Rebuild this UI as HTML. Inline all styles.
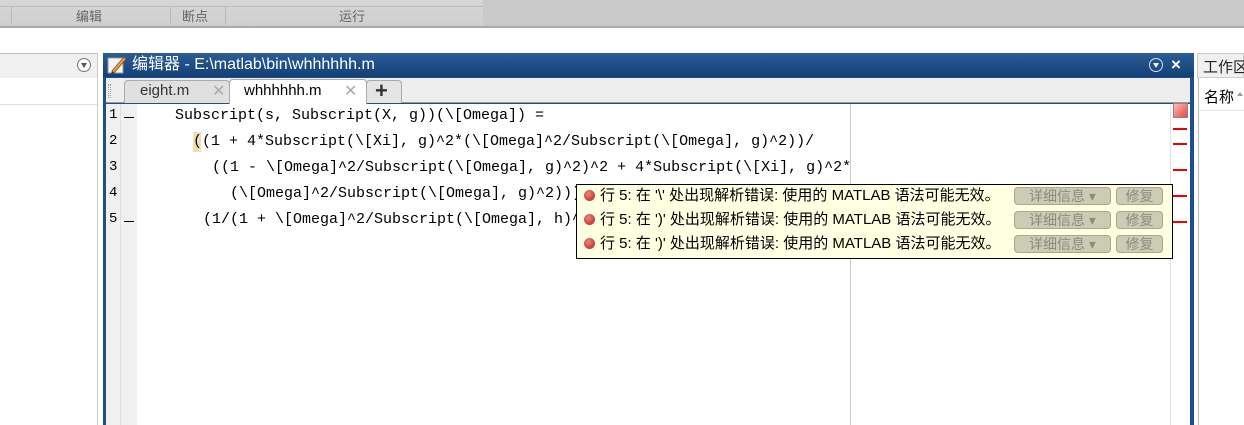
<!DOCTYPE html>
<html><head><meta charset="utf-8"><style>
*{margin:0;padding:0;box-sizing:border-box}
body{width:1244px;height:425px;overflow:hidden;background:#fff;position:relative;font-family:"Liberation Sans","Noto Sans CJK SC",sans-serif}
.a{position:absolute;white-space:nowrap}
.code{position:absolute;font-family:"Liberation Mono","Noto Sans CJK SC",monospace;font-size:15px;white-space:pre;color:#000;height:26px;line-height:26px}
.ln{position:absolute;left:109px;font-family:"Liberation Mono",monospace;font-size:14px;color:#000}
.dash{position:absolute;left:124px;width:10px;height:1px;background:#000}
.msg{position:absolute;left:584px;font-size:15px;color:#000;height:20px;line-height:20px;white-space:pre}
.ic{display:inline-block;width:11px;height:11px;border-radius:50%;background:radial-gradient(circle at 40% 35%,#f08080,#b02020);vertical-align:-1px;margin-right:5px;position:relative}
.btn{position:absolute;height:18px;border:1px solid #a8a890;border-radius:4px;background:#ccccb4;color:#8c8c7c;font-size:14px;line-height:16px;text-align:center;white-space:nowrap}
.mk{position:absolute;left:1173px;width:14px;height:2px;background:#e00}
</style></head><body>
<div class="a" style="left:0;top:0;width:1244px;height:26px;background:#c9c9c9"></div>
<div class="a" style="left:0;top:0;width:483px;height:26px;background:linear-gradient(#d6d6d6,#cfcfcf)"></div>
<div class="a" style="left:0;top:6px;width:483px;height:1px;background:#bdbdbd"></div>
<div class="a" style="left:11px;top:7px;width:1px;height:18px;background:#b8b8b8"></div>
<div class="a" style="left:170px;top:7px;width:1px;height:18px;background:#b8b8b8"></div>
<div class="a" style="left:225px;top:7px;width:1px;height:18px;background:#b8b8b8"></div>
<div class="a" style="left:76px;top:6px;font-size:13px;color:#666">编辑</div>
<div class="a" style="left:182px;top:6px;font-size:13px;color:#666">断点</div>
<div class="a" style="left:339px;top:6px;font-size:13px;color:#666">运行</div>
<div class="a" style="left:0;top:26px;width:1244px;height:2px;background:#aaa"></div>
<div class="a" style="left:0;top:53px;width:97px;height:25px;background:#f0f0f0;border-top:1px solid #bbb"></div>
<div class="a" style="left:77px;top:58px;width:14px;height:14px;border:1px solid #777;border-radius:50%;background:#fafafa"></div>
<div class="a" style="left:81px;top:63px;width:0;height:0;border-left:3px solid transparent;border-right:3px solid transparent;border-top:5px solid #555"></div>
<div class="a" style="left:0;top:104px;width:97px;height:1px;background:#ddd"></div>
<div class="a" style="left:97px;top:53px;width:1px;height:372px;background:#ccc"></div>
<div class="a" style="left:103px;top:53px;width:1091px;height:372px;background:#1f4f8a"></div>
<div class="a" style="left:103px;top:53px;width:1091px;height:24px;background:linear-gradient(#2c5d97,#143f75)"></div>
<svg class="a" style="left:107px;top:55px" width="20" height="20" viewBox="0 0 20 20"><rect x="1" y="3" width="15" height="15" fill="#f4f4f4" stroke="#999"/><path d="M5 16 L17 2 L19 4 L7 18 Z" fill="#e8a040" stroke="#8a5010" stroke-width="0.8"/><path d="M5 16 L4 19 L7 18Z" fill="#333"/></svg>
<div class="a" style="left:132px;top:55px;font-size:16px;line-height:20px;color:#fff">编辑器 - E:\matlab\bin\whhhhhh.m</div>
<div class="a" style="left:1149px;top:58px;width:14px;height:14px;border:1.5px solid #dde;border-radius:50%"></div>
<div class="a" style="left:1153px;top:63px;width:0;height:0;border-left:3px solid transparent;border-right:3px solid transparent;border-top:5px solid #eef"></div>
<div class="a" style="left:1171px;top:55px;font-size:17px;color:#fff;font-weight:bold">×</div>
<div class="a" style="left:106px;top:78px;width:1084px;height:25px;background:#eeeeee;border-bottom:1px solid #999"></div>
<div class="a" style="left:108px;top:84px;width:3px;height:14px;border-left:1px dotted #999;border-right:1px dotted #999"></div>
<div class="a" style="left:124px;top:80px;width:106px;height:23px;background:#e0e0e0;border:1px solid #aaa;border-bottom:none;border-radius:4px 4px 0 0"></div>
<div class="a" style="left:140px;top:82px;font-size:15px;color:#333">eight.m</div>
<div class="a" style="left:212px;top:81px;font-size:16px;color:#aaa">✕</div>
<div class="a" style="left:229px;top:79px;width:138px;height:25px;background:#fff;border:1px solid #aaa;border-bottom:none;border-radius:4px 4px 0 0"></div>
<div class="a" style="left:244px;top:82px;font-size:15px;color:#000">whhhhhh.m</div>
<div class="a" style="left:344px;top:81px;font-size:16px;color:#aaa">✕</div>
<div class="a" style="left:366px;top:80px;width:36px;height:23px;background:#e4e4e4;border:1px solid #aaa;border-bottom:none;border-radius:4px 4px 0 0"></div>
<div class="a" style="left:375px;top:78px;font-size:22px;color:#333;font-weight:bold">+</div>
<div class="a" style="left:106px;top:104px;width:1084px;height:321px;background:#fff"></div>
<div class="a" style="left:106px;top:104px;width:31px;height:321px;background:#f0f0f0"></div>
<div class="a" style="left:120px;top:104px;width:1px;height:321px;background:#e0e0e0"></div>
<div class="a" style="left:850px;top:104px;width:1px;height:321px;background:#ccc"></div>
<div class="a" style="left:1170px;top:104px;width:1px;height:321px;background:#e4e4e4"></div>
<div class="a" style="left:1173px;top:103px;width:15px;height:15px;border:1px solid #888;background:linear-gradient(135deg,#fbb,#e44)"></div>
<div class="mk" style="top:128px"></div><div class="mk" style="top:143px"></div><div class="mk" style="top:169px"></div><div class="mk" style="top:195px"></div><div class="mk" style="top:221px"></div>
<div class="ln" style="top:107px">1</div><div class="dash" style="top:117px"></div>
<div class="ln" style="top:133px">2</div>
<div class="ln" style="top:159px">3</div>
<div class="ln" style="top:185px">4</div>
<div class="ln" style="top:211px">5</div><div class="dash" style="top:221px"></div>
<div class="a" style="left:193px;top:132px;width:8px;height:20px;background:#f0e0b0"></div>
<div class="code" style="left:175px;top:103px">Subscript(s, Subscript(X, g))(\[Omega]) =</div>
<div class="code" style="left:193px;top:129px">((1 + 4*Subscript(\[Xi], g)^2*(\[Omega]^2/Subscript(\[Omega], g)^2))/</div>
<div class="code" style="left:212px;top:155px">((1 - \[Omega]^2/Subscript(\[Omega], g)^2)^2 + 4*Subscript(\[Xi], g)^2*</div>
<div class="code" style="left:230px;top:181px">(\[Omega]^2/Subscript(\[Omega], g)^2)))</div>
<div class="code" style="left:203px;top:207px">(1/(1 + \[Omega]^2/Subscript(\[Omega], h)^</div>
<div class="a" style="left:576px;top:184px;width:597px;height:75px;background:#ffffe1;border:1px solid #000"></div>
<div class="msg" style="top:186px"><span class="ic"></span>行 5: 在 '\' 处出现解析错误: 使用的 MATLAB 语法可能无效。</div>
<div class="msg" style="top:210px"><span class="ic"></span>行 5: 在 ')' 处出现解析错误: 使用的 MATLAB 语法可能无效。</div>
<div class="msg" style="top:234px"><span class="ic"></span>行 5: 在 ')' 处出现解析错误: 使用的 MATLAB 语法可能无效。</div>
<div class="btn" style="left:1014px;top:187px;width:97px">详细信息 ▾</div><div class="btn" style="left:1116px;top:187px;width:47px">修复</div>
<div class="btn" style="left:1014px;top:211px;width:97px">详细信息 ▾</div><div class="btn" style="left:1116px;top:211px;width:47px">修复</div>
<div class="btn" style="left:1014px;top:235px;width:97px">详细信息 ▾</div><div class="btn" style="left:1116px;top:235px;width:47px">修复</div>
<div class="a" style="left:1197px;top:53px;width:47px;height:25px;background:#f0f0f0;border:1px solid #ccc;overflow:hidden"></div>
<div class="a" style="left:1203px;top:56px;width:41px;overflow:hidden;font-size:15px;color:#222">工作区</div>
<div class="a" style="left:1198px;top:78px;width:1px;height:347px;background:#bbb"></div>
<div class="a" style="left:1204px;top:86px;font-size:15px;color:#000">名称</div>
<div class="a" style="left:1237px;top:92px;width:0;height:0;border-left:3px solid transparent;border-right:3px solid transparent;border-bottom:4px solid #999"></div>
<div class="a" style="left:1199px;top:110px;width:45px;height:1px;background:#e4e4e4"></div>
</body></html>
